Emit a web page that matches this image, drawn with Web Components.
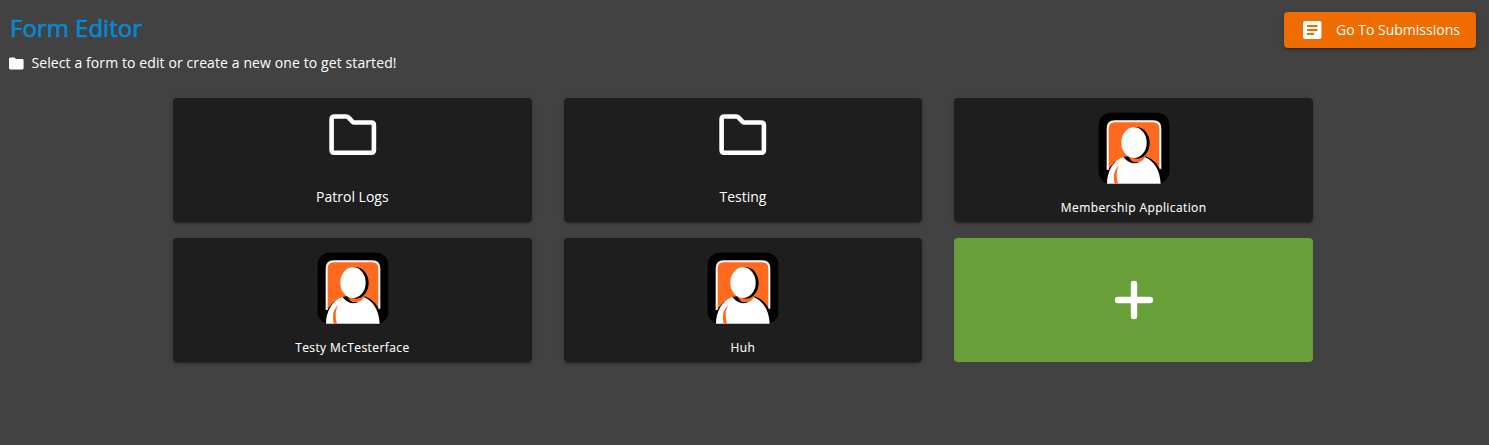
<!DOCTYPE html>
<html lang="en">
<head>
<meta charset="utf-8">
<title>Form Editor</title>
<style>
html,body{margin:0;background:#424242}
body{font:14px/20px "Open Sans","Noto Sans",sans-serif;color:#fff}
</style>
</head>
<body>
<form-editor></form-editor>
<script>
const define = (name, html) => {
  const t = document.createElement('template');
  t.innerHTML = html;
  customElements.define(name, class extends HTMLElement {
    constructor() {
      super();
      this.attachShadow({mode: 'open'}).append(t.content.cloneNode(true));
    }
  });
};

define('folder-icon', `<style>:host{display:block;width:48px;height:42px;margin-left:1px}svg{display:block}</style>
<svg width="48" height="42" viewBox="0 0 48 42" fill="none" stroke="#fff" stroke-width="4.6" stroke-linejoin="round"><path d="M5.3 2.5H17.3Q18.5 2.5 19.4 3.4L23.7 7.8Q24.4 8.5 25.4 8.5H42.2Q44.9 8.5 44.9 11.2V36Q44.9 38.7 42.2 38.7H5.3Q2.6 38.7 2.6 36V5.2Q2.6 2.5 5.3 2.5Z"/></svg>`);

define('person-icon', `<style>:host{display:block;width:72px;height:72px;margin-left:1px}svg{display:block}</style>
<svg width="72" height="72" viewBox="0 0 216 216">
<rect x="2" y="2" width="212" height="213" rx="36"/>
<path d="M29 174V50Q29 28 51 28H165Q187 28 187 50V174L160 150H50Z" fill="#ff6a1f"/>
<path d="M29 174V50Q29 28 51 28H165Q187 28 187 50V170" fill="none" stroke="#fff" stroke-width="6"/>
<path d="M141 132Q180 146 190 184V214H170Z"/>
<ellipse cx="117" cy="93" rx="38" ry="47"/>
<path d="M76 135Q91 156 113 155Q99 149 91 133Z"/>
<path d="M27 215C27 178 47 144 76 135Q91 154 111 154Q131 152 141 136C168 147 186 174 188 215Z" fill="#fff"/>
<path d="M64 160C46 174 46 195 50 215H60C54 192 55 174 64 160Z" fill="#ff6a1f"/>
<ellipse cx="108" cy="92" rx="38" ry="46" fill="#fff"/>
</svg>`);

define('plus-icon', `<style>:host{display:block;width:40px;height:40px}svg{display:block}</style>
<svg width="40" height="40" viewBox="0 0 40 40"><path d="M20 4V36M4 20H36" stroke="#fff" stroke-width="6.4" stroke-linecap="round"/></svg>`);

define('form-card', `<style>
:host{display:flex;flex-direction:column;align-items:center;box-sizing:border-box;height:124px;padding-top:16px;border-radius:4px;background:#1e1e1e;box-shadow:0 3px 1px -2px rgba(0,0,0,.2),0 2px 2px rgba(0,0,0,.14),0 1px 5px rgba(0,0,0,.12)}
.label{margin-top:31px;white-space:nowrap}
:host([kind=form]){padding-top:14px}
:host([kind=form]) .label{margin-top:14px;font-size:12px;letter-spacing:.4px;-webkit-text-stroke:.1px #fff}
:host([kind=add]){background:#689f38;box-shadow:none;padding-top:42px}
:host([kind=add]) .label{display:none}
</style><slot name="icon"></slot><div class="label"><slot></slot></div>`);

define('action-button', `<style>
:host{display:flex;align-items:center;box-sizing:border-box;width:192px;height:36px;padding-left:19px;border-radius:4px;background:#ef6c00;white-space:nowrap;box-shadow:0 3px 1px -2px rgba(0,0,0,.2),0 2px 2px rgba(0,0,0,.14),0 1px 5px rgba(0,0,0,.12)}
svg{margin-right:14px}
</style><svg width="19" height="18" viewBox="0 0 19 18"><rect width="18.5" height="18" rx="2" fill="#fff"/><path d="M4 5H14.5M4 9H14.5M4 13H11" stroke="#ef6c00" stroke-width="2"/></svg><span><slot></slot></span>`);

define('page-header', `<style>
:host{display:flex;justify-content:space-between;height:98px;box-sizing:border-box;padding:12px 13px 0 9px}
h1{margin:0 0 0 1px;font:400 24px/32px "Open Sans","Noto Sans",sans-serif;color:#0788d4;-webkit-text-stroke:.7px #0788d4;white-space:nowrap}
p{display:flex;align-items:center;gap:7px;margin:9px 0 0 .4px;white-space:nowrap;letter-spacing:.103px}
</style><div><h1><slot name="title"></slot></h1>
<p><svg width="15" height="14" viewBox="0 0 15 14"><path d="M1.5 1.5H5.5L7 3H13.2Q14.6 3 14.6 4.4V12Q14.6 13.4 13.2 13.4H1.4Q0 13.4 0 12V3Q0 1.5 1.5 1.5Z" fill="#fff"/></svg><span><slot></slot></span></p></div>
<slot name="action"></slot>`);

define('card-grid', `<style>:host{display:grid;grid-template-columns:repeat(3,1fr);gap:16px 32px;width:1140px;margin-left:173px}</style><slot></slot>`);

define('form-editor', `<style>:host{display:block;height:445px;overflow:hidden;background:#424242}</style>
<page-header><span slot="title">Form Editor</span>Select a form to edit or create a new one to get started!<action-button slot="action">Go To Submissions</action-button></page-header>
<card-grid>
<form-card><folder-icon slot="icon"></folder-icon>Patrol Logs</form-card>
<form-card><folder-icon slot="icon"></folder-icon>Testing</form-card>
<form-card kind="form"><person-icon slot="icon"></person-icon>Membership Application</form-card>
<form-card kind="form"><person-icon slot="icon"></person-icon>Testy McTesterface</form-card>
<form-card kind="form"><person-icon slot="icon"></person-icon>Huh</form-card>
<form-card kind="add"><plus-icon slot="icon"></plus-icon></form-card>
</card-grid>`);
</script>
</body>
</html>
